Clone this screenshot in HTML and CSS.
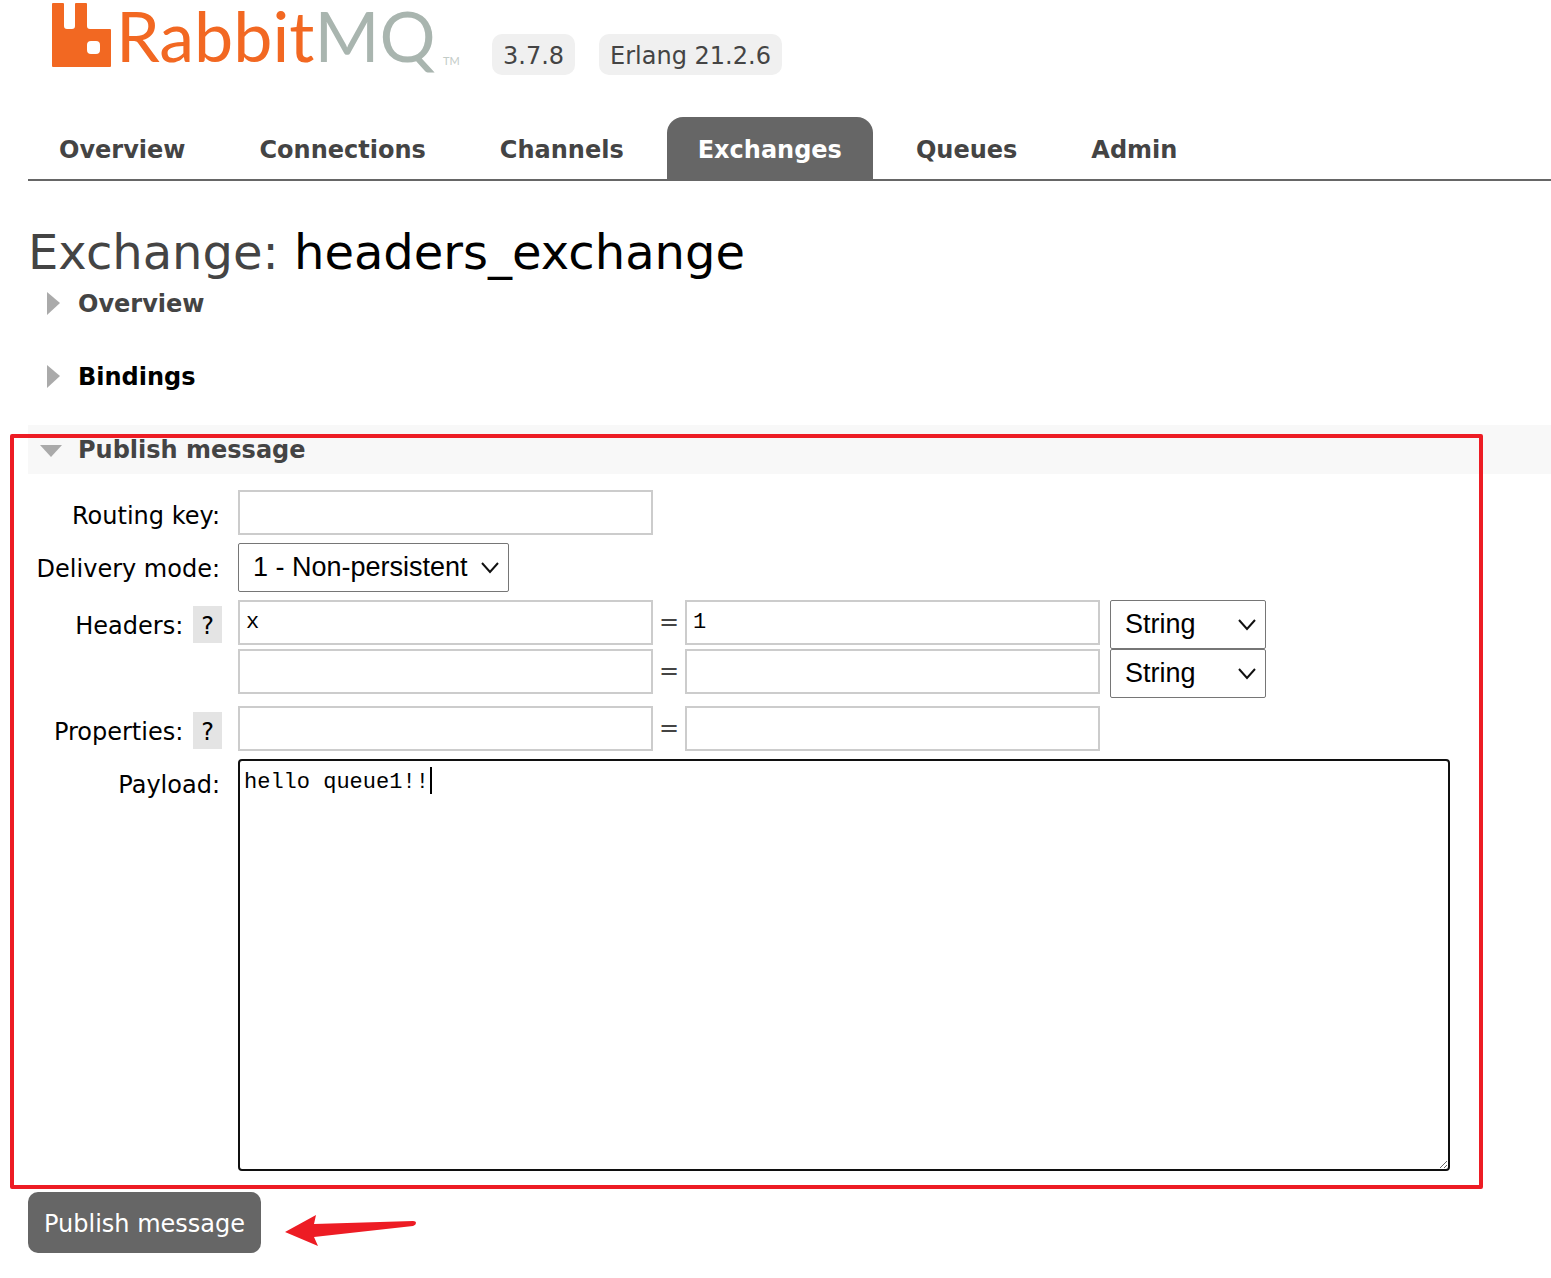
FILE: index.html
```html
<!DOCTYPE html>
<html lang="en">
<head>
  <meta charset="UTF-8" />
  <meta name="viewport" content="width=device-width, initial-scale=1.0"/>
  <title>RabbitMQ Management</title>
  <link rel="stylesheet" href="styles.css">
</head>
<body>
  <header class="header">
    <a class="logo" href="#" aria-label="RabbitMQ">
      <svg width="408" height="75" viewBox="0 0 408 75">
        <path fill="#f26822" d="M1 3H11Q12 3 12 4V26Q12 29 15 29H20Q23 29 23 26V4Q23 3 24 3H34Q35 3 35 4V26Q35 29 38 29H58Q59 29 59 30V66Q59 67 58 67H1Q0 67 0 66V4Q0 3 1 3ZM39 41Q35 41 35 45V50Q35 54 39 54H44Q48 54 48 50V45Q48 41 44 41Z"/>
        <text class="logo-name" x="64" y="62">Rabbit<tspan class="logo-mq">MQ</tspan></text>
        <text class="logo-tm" x="391" y="65">TM</text>
      </svg>
    </a>
    <span class="version">3.7.8</span>
    <span class="version">Erlang 21.2.6</span>
  </header>

  <nav class="menu">
    <a href="#overview">Overview</a>
    <a href="#connections">Connections</a>
    <a href="#channels">Channels</a>
    <a href="#exchanges" class="selected">Exchanges</a>
    <a href="#queues">Queues</a>
    <a href="#admin">Admin</a>
  </nav>

  <main class="main">
    <h1>Exchange: <b>headers_exchange</b></h1>

    <section class="section">
      <h2><button type="button" class="toggle">
        <svg class="arrow" width="24" height="24" viewBox="0 0 24 24"><path d="M7 0L20 11L7 23Z"/></svg>Overview</button></h2>
    </section>

    <section class="section">
      <h2><button type="button" class="toggle active">
        <svg class="arrow" width="24" height="24" viewBox="0 0 24 24"><path d="M7 0L20 11L7 23Z"/></svg>Bindings</button></h2>
    </section>

    <section class="section publish">
      <h2 class="open"><button type="button" class="toggle">
        <svg class="arrow" width="24" height="24" viewBox="0 0 24 24"><path d="M0 7H22L11 19Z"/></svg>Publish message</button></h2>

      <form id="publishForm" class="form">
        <label class="name" for="routingKey">Routing key:</label>
        <div class="field"><input type="text" id="routingKey" /></div>

        <label class="name" for="deliveryMode">Delivery mode:</label>
        <div class="field">
          <select id="deliveryMode" class="mode">
            <option>1 - Non-persistent</option>
            <option>2 - Persistent</option>
          </select>
        </div>

        <div class="name">
          <label for="headerKey1">Headers:</label>
          <button type="button" class="help">?</button>
        </div>
        <div class="rows">
          <div class="field">
            <input type="text" id="headerKey1" value="x" />
            <span class="equals">=</span>
            <input type="text" aria-label="Header value" value="1" />
            <select class="type" aria-label="Header type">
              <option>String</option>
              <option>Number</option>
              <option>Boolean</option>
            </select>
          </div>
          <div class="field">
            <input type="text" aria-label="Header name" />
            <span class="equals">=</span>
            <input type="text" aria-label="Header value" />
            <select class="type" aria-label="Header type">
              <option>String</option>
              <option>Number</option>
              <option>Boolean</option>
            </select>
          </div>
        </div>

        <div class="name">
          <label for="propKey">Properties:</label>
          <button type="button" class="help">?</button>
        </div>
        <div class="field">
          <input type="text" id="propKey" />
          <span class="equals">=</span>
          <input type="text" aria-label="Property value" />
        </div>

        <label class="name" for="payload">Payload:</label>
        <div class="payload">
          <textarea id="payload" spellcheck="false">hello queue1!!</textarea>
          <span class="caret"></span>
        </div>
      </form>
      <div class="highlight"></div>
    </section>

    <div class="actions">
      <button type="submit" form="publishForm" class="submit">Publish message</button>
      <svg width="132" height="32" viewBox="0 0 132 32">
        <path fill="#ed1c24" d="M0 17L31 0L29 9L128 6Q131 6 131 8Q131 10 128 11L29 22L33 31Z"/>
      </svg>
    </div>
  </main>
</body>
</html>
```
FILE: styles.css
```css
* {
  box-sizing: border-box;
}
body {
  margin: 0;
  background-color: #fff;
  color: #444;
  font-family: Verdana, "DejaVu Sans", sans-serif;
  font-size: 24px;
  line-height: 32px;
}
button {
  border: none;
  font-family: inherit;
  font-size: 24px;
  line-height: 32px;
  cursor: pointer;
}

/* header */
.header {
  display: flex;
  align-items: flex-end;
  gap: 24px;
  padding-left: 52px;
}
.logo {
  margin-right: 8px;
}
.logo svg {
  display: block;
  overflow: visible;
}
.logo-name {
  font-family: Lato, sans-serif;
  font-size: 70px;
  font-weight: 400;
  fill: #f26822;
}
.logo-mq {
  fill: #a9b5af;
}
.logo-tm {
  font-family: Lato, sans-serif;
  font-size: 11px;
  fill: #c3cbc7;
}
.version {
  padding: 6px 11px 3px;
  border-radius: 10px;
  background-color: #f0f0f0;
}

/* tabs */
.menu {
  display: flex;
  gap: 12px;
  margin: 42px 0 0 28px;
  border-bottom: 2px solid #666;
}
.menu a {
  padding: 17px 31px 13px;
  border-radius: 16px 16px 0 0;
  color: #444;
  font-weight: bold;
  text-decoration: none;
}
.menu a.selected {
  background-color: #666;
  color: #fff;
}

.main {
  padding-left: 28px;
}
h1 {
  margin: 44px 0 0;
  font-size: 48px;
  font-weight: normal;
  line-height: 54px;
}
h1 b {
  color: #000;
  font-weight: normal;
}

/* collapsible sections */
.section {
  margin-bottom: 24px;
}
h2 {
  margin: 0;
  font-size: 24px;
}
h2.open {
  background-color: #f8f8f8;
}
.toggle {
  display: flex;
  align-items: center;
  gap: 14px;
  width: 100%;
  padding: 9px 12px 8px;
  background: none;
  color: #444;
  font-weight: bold;
}
.toggle.active {
  color: #000;
}
.arrow {
  fill: #aaa;
}

/* publish form */
.publish {
  position: relative;
  margin-bottom: 21px;
}
.form {
  display: grid;
  grid-template-columns: 194px 1fr;
  column-gap: 16px;
  row-gap: 8px;
  padding: 16px 101px 0 0;
}
.name {
  padding-top: 10px;
  color: #000;
  text-align: right;
}
div.name {
  display: flex;
  justify-content: flex-end;
  align-items: flex-start;
  gap: 10px;
  padding-top: 6px;
}
div.name label {
  padding-top: 4px;
}
label.name {
  padding-right: 2px;
}
.help {
  padding: 4px 8px 1px;
  background-color: #e4e4e4;
  color: #000;
}
.field {
  display: flex;
  align-items: flex-start;
}
input {
  width: 415px;
  height: 45px;
  padding: 0 6px;
  border: 2px solid #ccc;
  font-family: "Liberation Mono", monospace;
  font-size: 22px;
  color: #000;
}
.equals {
  width: 32px;
  padding-top: 6px;
  text-align: center;
}
select {
  height: 49px;
  padding: 0 14px 2px;
  border: 1px solid #767676;
  border-radius: 2px;
  appearance: none;
  background: #fff url("data:image/svg+xml,%3Csvg xmlns='http://www.w3.org/2000/svg' width='18' height='12'%3E%3Cpath d='M1 1L9 10L17 1' fill='none' stroke='%23111' stroke-width='2'/%3E%3C/svg%3E") no-repeat right 9px center;
  color: #000;
  font-family: Arial, "Liberation Sans", sans-serif;
  font-size: 27px;
}
.mode {
  width: 271px;
}
.type {
  width: 156px;
  margin-left: 10px;
}
.payload {
  position: relative;
}
textarea {
  display: block;
  width: 100%;
  height: 412px;
  padding: 8px 4px;
  border: 2px solid #101010;
  border-radius: 4px;
  color: #000;
  font-family: "Liberation Mono", monospace;
  font-size: 22px;
  line-height: 28px;
}
.caret {
  position: absolute;
  top: 8px;
  left: 192px;
  width: 2px;
  height: 27px;
  background-color: #000;
}
.highlight {
  position: absolute;
  top: 9px;
  right: 68px;
  bottom: -18px;
  left: -18px;
  border: 4px solid #ed1c24;
  border-radius: 2px;
  pointer-events: none;
}

.actions {
  display: flex;
  align-items: center;
  gap: 24px;
  padding-bottom: 24px;
}
.submit {
  padding: 16px 16px 13px;
  border-radius: 10px;
  background-color: #666;
  color: #fff;
}
.actions svg {
  margin-top: 16px;
}
```
